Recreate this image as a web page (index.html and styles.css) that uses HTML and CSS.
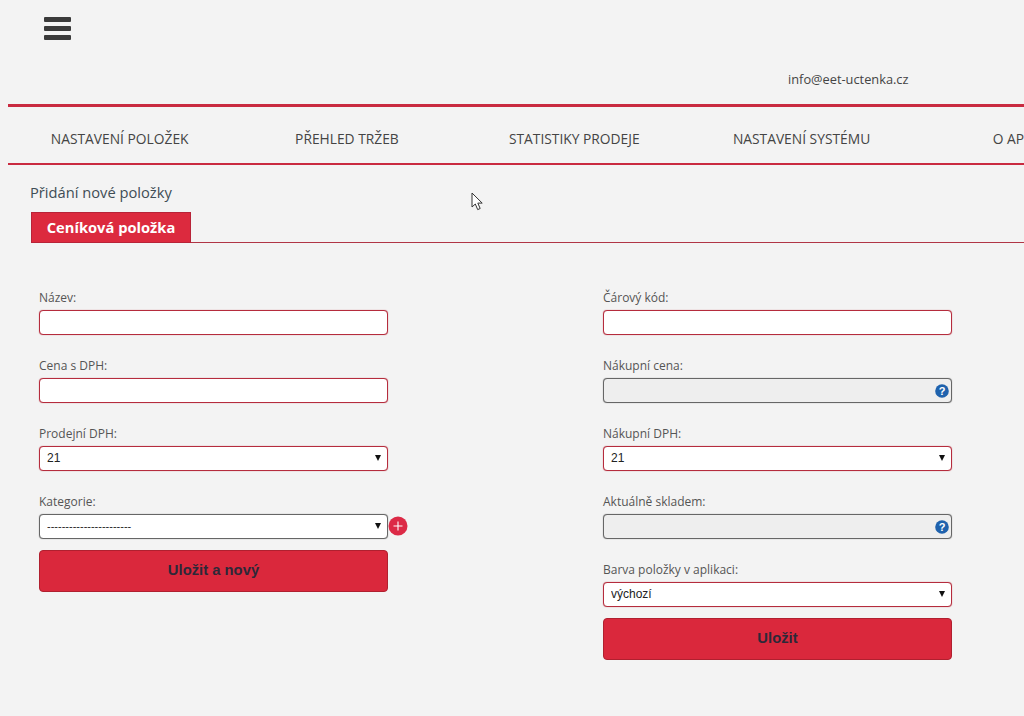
FILE: index.html
```html
<!DOCTYPE html>
<html lang="en">
  <head>
    <meta charset="UTF-8" />
    <title>Nastavení položek</title>
    <link rel="stylesheet" href="styles.css">
  </head>
  <body>
    <div class="page">
      <header class="top">
        <div class="hamburger"><span></span><span></span><span></span></div>
        <div class="email">info@eet-uctenka.cz</div>
      </header>

      <nav class="menu">
        <a>NASTAVENÍ POLOŽEK</a>
        <a>PŘEHLED TRŽEB</a>
        <a>STATISTIKY PRODEJE</a>
        <a>NASTAVENÍ SYSTÉMU</a>
        <a>O APLIKACI</a>
      </nav>

      <h1 class="title">Přidání nové položky</h1>
      <div class="tabs"><div class="tab">Ceníková položka</div></div>

      <form class="form">
        <div class="col">
          <div class="field">
            <label>Název:</label>
            <div class="control"><input type="text" /></div>
          </div>
          <div class="field">
            <label>Cena s DPH:</label>
            <div class="control"><input type="text" /></div>
          </div>
          <div class="field">
            <label>Prodejní DPH:</label>
            <div class="control select"><select><option>21</option></select></div>
          </div>
          <div class="field">
            <label>Kategorie:</label>
            <div class="control select">
              <select class="neutral"><option>-----------------------</option></select>
              <span class="add">
                <svg width="20" height="20" viewBox="0 0 20 20"><circle cx="10" cy="10" r="9.5" fill="#dc2a46" /><path d="M10 5.5v9M5.5 10h9" stroke="#fff" stroke-width="1.1" /></svg>
              </span>
            </div>
          </div>
          <button type="button" class="save">Uložit a nový</button>
        </div>

        <div class="col">
          <div class="field">
            <label>Čárový kód:</label>
            <div class="control"><input type="text" /></div>
          </div>
          <div class="field">
            <label>Nákupní cena:</label>
            <div class="control">
              <input type="text" disabled />
              <span class="help">
                <svg width="14" height="14" viewBox="0 0 14 14"><circle cx="7" cy="7" r="6.8" fill="#1f62ad" /><text x="7" y="10.8" text-anchor="middle" class="help-mark">?</text></svg>
              </span>
            </div>
          </div>
          <div class="field">
            <label>Nákupní DPH:</label>
            <div class="control select"><select><option>21</option></select></div>
          </div>
          <div class="field">
            <label>Aktuálně skladem:</label>
            <div class="control">
              <input type="text" disabled />
              <span class="help">
                <svg width="14" height="14" viewBox="0 0 14 14"><circle cx="7" cy="7" r="6.8" fill="#1f62ad" /><text x="7" y="10.8" text-anchor="middle" class="help-mark">?</text></svg>
              </span>
            </div>
          </div>
          <div class="field">
            <label>Barva položky v aplikaci:</label>
            <div class="control select"><select><option>výchozí</option></select></div>
          </div>
          <button type="button" class="save">Uložit</button>
        </div>
      </form>

      <svg class="cursor" width="13" height="19" viewBox="0 0 13 19"><path d="M1 1v14l3.3-3 2.4 5.6 2.5-1.1-2.4-5.4h4.4z" fill="#fff" stroke="#333" stroke-width="1" /></svg>
    </div>
  </body>
</html>
```

FILE: styles.css
```css
*,
*::before,
*::after {
  box-sizing: border-box;
}

html,
body {
  height: 100%;
}

body {
  margin: 0;
  overflow: hidden;
  background-color: #f3f3f3;
  color: #444;
  font-family: 'Open Sans', sans-serif;
  font-size: 14px;
}

.page {
  position: relative;
  height: 716px;
  padding-left: 8px;
}

.top {
  height: 104px;
  padding-top: 17px;
}

.hamburger {
  display: flex;
  flex-direction: column;
  gap: 4px;
  width: 27px;
  margin-left: 36px;
}

.hamburger span {
  height: 5px;
  border-radius: 1px;
  background-color: #3a3a3a;
}

.email {
  margin: 29px 0 0 780px;
  font-size: 12.8px;
  line-height: 20px;
}

.menu {
  display: grid;
  grid-template-columns: repeat(5, 223.3px);
  column-gap: 4px;
  align-items: center;
  height: 61px;
  padding-top: 7px;
  border-top: 3px solid #c92a40;
  border-bottom: 2px solid #c92a40;
  font-size: 13.8px;
  white-space: nowrap;
}

.menu a {
  text-align: center;
}

.title {
  margin: 17px 0 0 22px;
  color: #3f4d55;
  font-size: 14.7px;
  font-weight: 400;
  line-height: 21px;
}

.tabs {
  height: 31px;
  margin: 9px 0 0 23px;
  border-bottom: 1px solid #b03545;
}

.tab {
  width: 160px;
  height: 31px;
  border: 1px solid #b82338;
  background-color: #dc2a3e;
  color: #fff;
  font-size: 14.7px;
  font-weight: 700;
  line-height: 29px;
  text-align: center;
}

.form {
  display: grid;
  grid-template-columns: 349px 349px;
  column-gap: 215px;
  align-items: start;
  padding: 46px 0 0 31px;
}

.field {
  height: 68px;
}

.field label {
  display: block;
  height: 21px;
  color: #555;
  font-size: 12px;
  line-height: 17px;
}

.control {
  position: relative;
}

.control input,
.control select {
  display: block;
  width: 100%;
  height: 25px;
  margin: 0;
  border: 1px solid #b52c3d;
  border-radius: 4px;
  background-color: #fff;
  box-shadow: 0 0 1px #c0505a;
  color: #222;
  font-family: 'Liberation Sans', sans-serif;
  font-size: 12px;
}

.control select {
  padding: 0 20px 2px 7px;
  appearance: none;
}

.control select.neutral {
  border-color: #666;
  box-shadow: 0 0 1px #777;
  font-size: 11px;
}

.control input:disabled {
  border-color: #666;
  background-color: #eee;
  box-shadow: 0 0 1px #777;
}

.select::after {
  content: '';
  position: absolute;
  top: 9px;
  left: 336px;
  border-top: 6px solid #111;
  border-left: 3px solid transparent;
  border-right: 3px solid transparent;
}

.add {
  position: absolute;
  top: 2px;
  left: 349px;
  width: 20px;
  height: 20px;
}

.help {
  position: absolute;
  top: 5px;
  right: 3px;
  width: 14px;
  height: 14px;
}

.help-mark {
  fill: #fff;
  font-family: 'Liberation Sans', sans-serif;
  font-size: 11px;
  font-weight: 700;
}

.save {
  display: block;
  width: 100%;
  height: 42px;
  padding-bottom: 3px;
  border: 1px solid #b0202f;
  border-radius: 4px;
  background-color: #da283c;
  color: #2d2838;
  font-family: 'Liberation Sans', sans-serif;
  font-size: 14.8px;
  font-weight: 700;
}

.field + .save {
  margin-top: -11px;
}

.cursor {
  position: absolute;
  top: 192px;
  left: 471px;
}
```
